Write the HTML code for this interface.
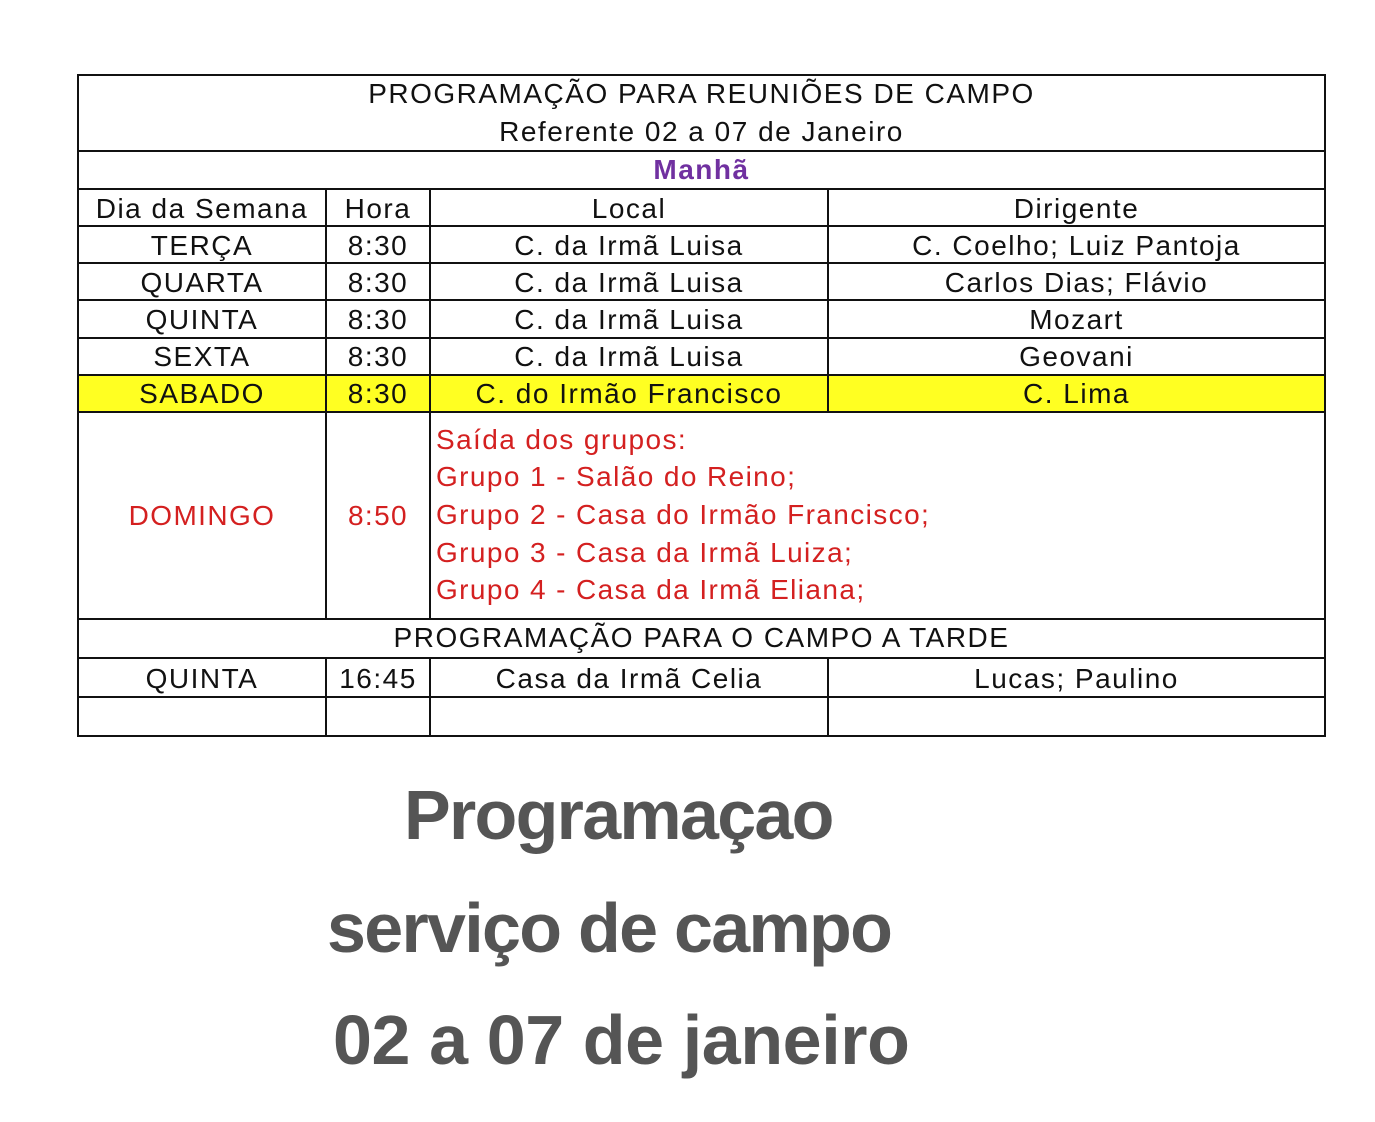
<!DOCTYPE html>
<html><head><meta charset="utf-8"><style>
body{margin:0;width:1375px;height:1122px;background:#fff;position:relative;overflow:hidden;font-family:"Liberation Sans",Arial,sans-serif;}
.h{position:absolute;height:2px;background:#111;}
.v{position:absolute;width:2px;background:#111;}
.t{position:absolute;font-size:28px;color:#111;text-align:center;line-height:37px;white-space:nowrap;letter-spacing:1.5px;}
.r{color:#d42020;letter-spacing:1.4px;}
.big{position:absolute;font-weight:bold;color:#555;font-size:70px;white-space:nowrap;letter-spacing:-1.7px;}
</style></head><body>
<div style="position:absolute;left:79px;top:376px;width:1245px;height:36px;background:#ffff22"></div>
<div class="h" style="left:77px;top:74px;width:1249px"></div>
<div class="h" style="left:77px;top:150px;width:1249px"></div>
<div class="h" style="left:77px;top:188px;width:1249px"></div>
<div class="h" style="left:77px;top:225px;width:1249px"></div>
<div class="h" style="left:77px;top:262px;width:1249px"></div>
<div class="h" style="left:77px;top:299px;width:1249px"></div>
<div class="h" style="left:77px;top:337px;width:1249px"></div>
<div class="h" style="left:77px;top:374px;width:1249px"></div>
<div class="h" style="left:77px;top:411px;width:1249px"></div>
<div class="h" style="left:77px;top:618px;width:1249px"></div>
<div class="h" style="left:77px;top:657px;width:1249px"></div>
<div class="h" style="left:77px;top:696px;width:1249px"></div>
<div class="h" style="left:77px;top:735px;width:1249px"></div>
<div class="v" style="left:77px;top:74px;height:663px"></div>
<div class="v" style="left:1324px;top:74px;height:663px"></div>
<div class="v" style="left:325px;top:188px;height:431px"></div>
<div class="v" style="left:429px;top:188px;height:431px"></div>
<div class="v" style="left:827px;top:188px;height:224px"></div>
<div class="v" style="left:325px;top:657px;height:80px"></div>
<div class="v" style="left:429px;top:657px;height:80px"></div>
<div class="v" style="left:827px;top:657px;height:80px"></div>

<div class="t" style="left:79px;width:1245px;top:75px">PROGRAMAÇÃO PARA REUNIÕES DE CAMPO</div>
<div class="t" style="left:79px;width:1245px;top:113px">Referente 02 a 07 de Janeiro</div>
<div class="t" style="left:79px;width:1245px;top:151px;color:#7030a0;font-weight:bold">Manhã</div>

<div class="t" style="left:79px;width:246px;top:190px">Dia da Semana</div>
<div class="t" style="left:327px;width:102px;top:190px">Hora</div>
<div class="t" style="left:431px;width:396px;top:190px">Local</div>
<div class="t" style="left:829px;width:495px;top:190px">Dirigente</div>

<div class="t" style="left:79px;width:246px;top:227px">TERÇA</div>
<div class="t" style="left:327px;width:102px;top:227px">8:30</div>
<div class="t" style="left:431px;width:396px;top:227px">C. da Irmã Luisa</div>
<div class="t" style="left:829px;width:495px;top:227px">C. Coelho; Luiz Pantoja</div>

<div class="t" style="left:79px;width:246px;top:264px">QUARTA</div>
<div class="t" style="left:327px;width:102px;top:264px">8:30</div>
<div class="t" style="left:431px;width:396px;top:264px">C. da Irmã Luisa</div>
<div class="t" style="left:829px;width:495px;top:264px">Carlos Dias; Flávio</div>

<div class="t" style="left:79px;width:246px;top:301px">QUINTA</div>
<div class="t" style="left:327px;width:102px;top:301px">8:30</div>
<div class="t" style="left:431px;width:396px;top:301px">C. da Irmã Luisa</div>
<div class="t" style="left:829px;width:495px;top:301px">Mozart</div>

<div class="t" style="left:79px;width:246px;top:338px">SEXTA</div>
<div class="t" style="left:327px;width:102px;top:338px">8:30</div>
<div class="t" style="left:431px;width:396px;top:338px">C. da Irmã Luisa</div>
<div class="t" style="left:829px;width:495px;top:338px">Geovani</div>

<div class="t" style="left:79px;width:246px;top:375px">SABADO</div>
<div class="t" style="left:327px;width:102px;top:375px">8:30</div>
<div class="t" style="left:431px;width:396px;top:375px">C. do Irmão Francisco</div>
<div class="t" style="left:829px;width:495px;top:375px">C. Lima</div>

<div class="t r" style="left:79px;width:246px;top:497px">DOMINGO</div>
<div class="t r" style="left:327px;width:102px;top:497px">8:50</div>
<div class="t r" style="left:436px;top:421px;text-align:left">Saída dos grupos:</div>
<div class="t r" style="left:436px;top:458px;text-align:left">Grupo 1 - Salão do Reino;</div>
<div class="t r" style="left:436px;top:496px;text-align:left">Grupo 2 - Casa do Irmão Francisco;</div>
<div class="t r" style="left:436px;top:534px;text-align:left">Grupo 3 - Casa da Irmã Luiza;</div>
<div class="t r" style="left:436px;top:571px;text-align:left">Grupo 4 - Casa da Irmã Eliana;</div>

<div class="t" style="left:79px;width:1245px;top:619px">PROGRAMAÇÃO PARA O CAMPO A TARDE</div>
<div class="t" style="left:79px;width:246px;top:660px">QUINTA</div>
<div class="t" style="left:327px;width:102px;top:660px">16:45</div>
<div class="t" style="left:431px;width:396px;top:660px">Casa da Irmã Celia</div>
<div class="t" style="left:829px;width:495px;top:660px">Lucas; Paulino</div>

<div class="big" style="left:404px;top:775px">Programaçao</div>
<div class="big" style="left:327px;top:888px">serviço de campo</div>
<div class="big" style="left:333px;top:1000px;letter-spacing:-0.4px">02 a 07 de janeiro</div>
</body></html>
